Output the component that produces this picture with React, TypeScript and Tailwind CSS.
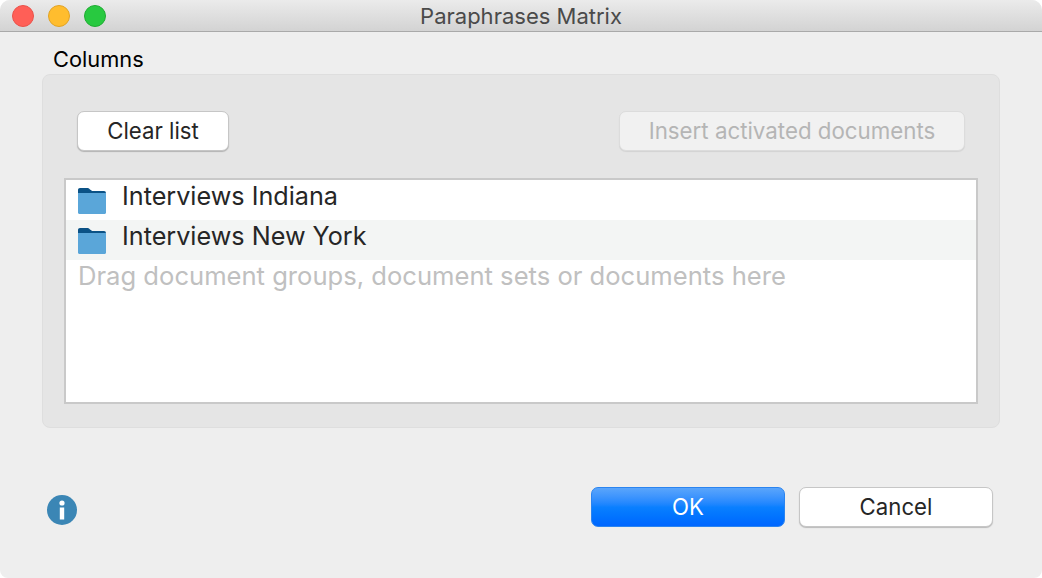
const FONT = "font-['Inter','Liberation_Sans',sans-serif]";

function FolderIcon() {
  return (
    <svg width="30" height="28" viewBox="0 0 30 28" className="shrink-0">
      <path d="M1 7.5V4C1 2.8 1.8 2 3 2H10C11.2 2 12 2.5 13 3.4L15.2 5H27C28.2 5 29 5.8 29 7.5Z" fill="#0b5286" />
      <path d="M1 7H29V26.5C29 27.4 28.4 28 27.5 28H2.5C1.6 28 1 27.4 1 26.5Z" fill="#5aa6d9" />
    </svg>
  );
}

function ListRow({ label, striped }: { label: string; striped?: boolean }) {
  return (
    <div className={`flex h-10 items-center pl-[11px] text-[25.2px] text-[#262626] ${striped ? "bg-[#f3f5f4]" : "bg-white"}`}>
      <div className="mr-[15px] flex">
        <FolderIcon />
      </div>
      <span className="-mt-[6px]">{label}</span>
    </div>
  );
}

function PushButton({ label, width }: { label: string; width: string }) {
  return (
    <button className={`h-10 ${width} rounded-[7px] border border-[#c6c6c6] bg-white pb-[1px] text-[22.2px] text-[#262626] shadow-[0_1px_1px_rgba(0,0,0,0.22)]`}>
      {label}
    </button>
  );
}

export default function App() {
  return (
    <div className={`flex h-[578px] w-[1042px] flex-col overflow-hidden rounded-t-[10px] rounded-b-[8px] bg-[#eeeeee] ${FONT}`}>
      <div className="relative flex h-8 items-center justify-center border-b border-[#a9a9a9] bg-gradient-to-b from-[#ebebeb] to-[#d3d3d3]">
        <div className="absolute top-[5px] left-3 flex gap-[14px]">
          <span className="size-[22px] rounded-full border border-[#e9524a] bg-[#ff5f57]" />
          <span className="size-[22px] rounded-full border border-[#e1a325] bg-[#ffbd2e]" />
          <span className="size-[22px] rounded-full border border-[#1fac32] bg-[#28c940]" />
        </div>
        <span className="pt-px text-[22px] text-[#4a4a4a]">Paraphrases Matrix</span>
      </div>

      <div className="flex flex-1 flex-col px-[42px]">
        <div className="mt-[14px] pl-[11px] text-[21.8px] leading-[27px] text-black">Columns</div>

        <div className="mt-[1px] h-[354px] w-[958px] rounded-[8px] border border-[#dedede] bg-[#e5e5e5] px-[21px] pt-9">
          <div className="flex justify-between pr-[13px] pl-[13px]">
            <PushButton label="Clear list" width="w-[152px]" />
            <button className="h-10 w-[346px] rounded-[7px] border border-[#dcdcdc] bg-[#f1f1f1] pb-[1px] text-[22.3px] text-[#b5b5b5] shadow-[0_1px_1px_rgba(0,0,0,0.08)]">
              Insert activated documents
            </button>
          </div>

          <div className="mt-[27px] h-[226px] w-[914px] border-2 border-[#c9c9c9] bg-white">
            <ListRow label="Interviews Indiana" />
            <ListRow label="Interviews New York" striped />
            <div className="pl-3 text-[25.6px] leading-[32px] text-[#c0c0c0]">
              Drag document groups, document sets or documents here
            </div>
          </div>
        </div>

        <div className="mt-[59px] flex items-center">
          <svg width="30" height="30" viewBox="0 0 30 30" className="ml-[5px] mt-[6px]">
            <circle cx="15" cy="15" r="15" fill="#3b86b5" />
            <circle cx="15" cy="8" r="2.6" fill="white" />
            <rect x="12.8" y="12.5" width="4.4" height="12" fill="white" />
          </svg>
          <div className="ml-auto flex gap-[14px] pr-[7px]">
            <button className="h-10 w-[194px] rounded-[7px] border border-[#2a84f0] bg-gradient-to-b from-[#5aa5fb] via-[#0a80ff] to-[#0066ff] pb-[1px] text-[22.2px] text-white">
              OK
            </button>
            <PushButton label="Cancel" width="w-[194px]" />
          </div>
        </div>
      </div>
    </div>
  );
}
